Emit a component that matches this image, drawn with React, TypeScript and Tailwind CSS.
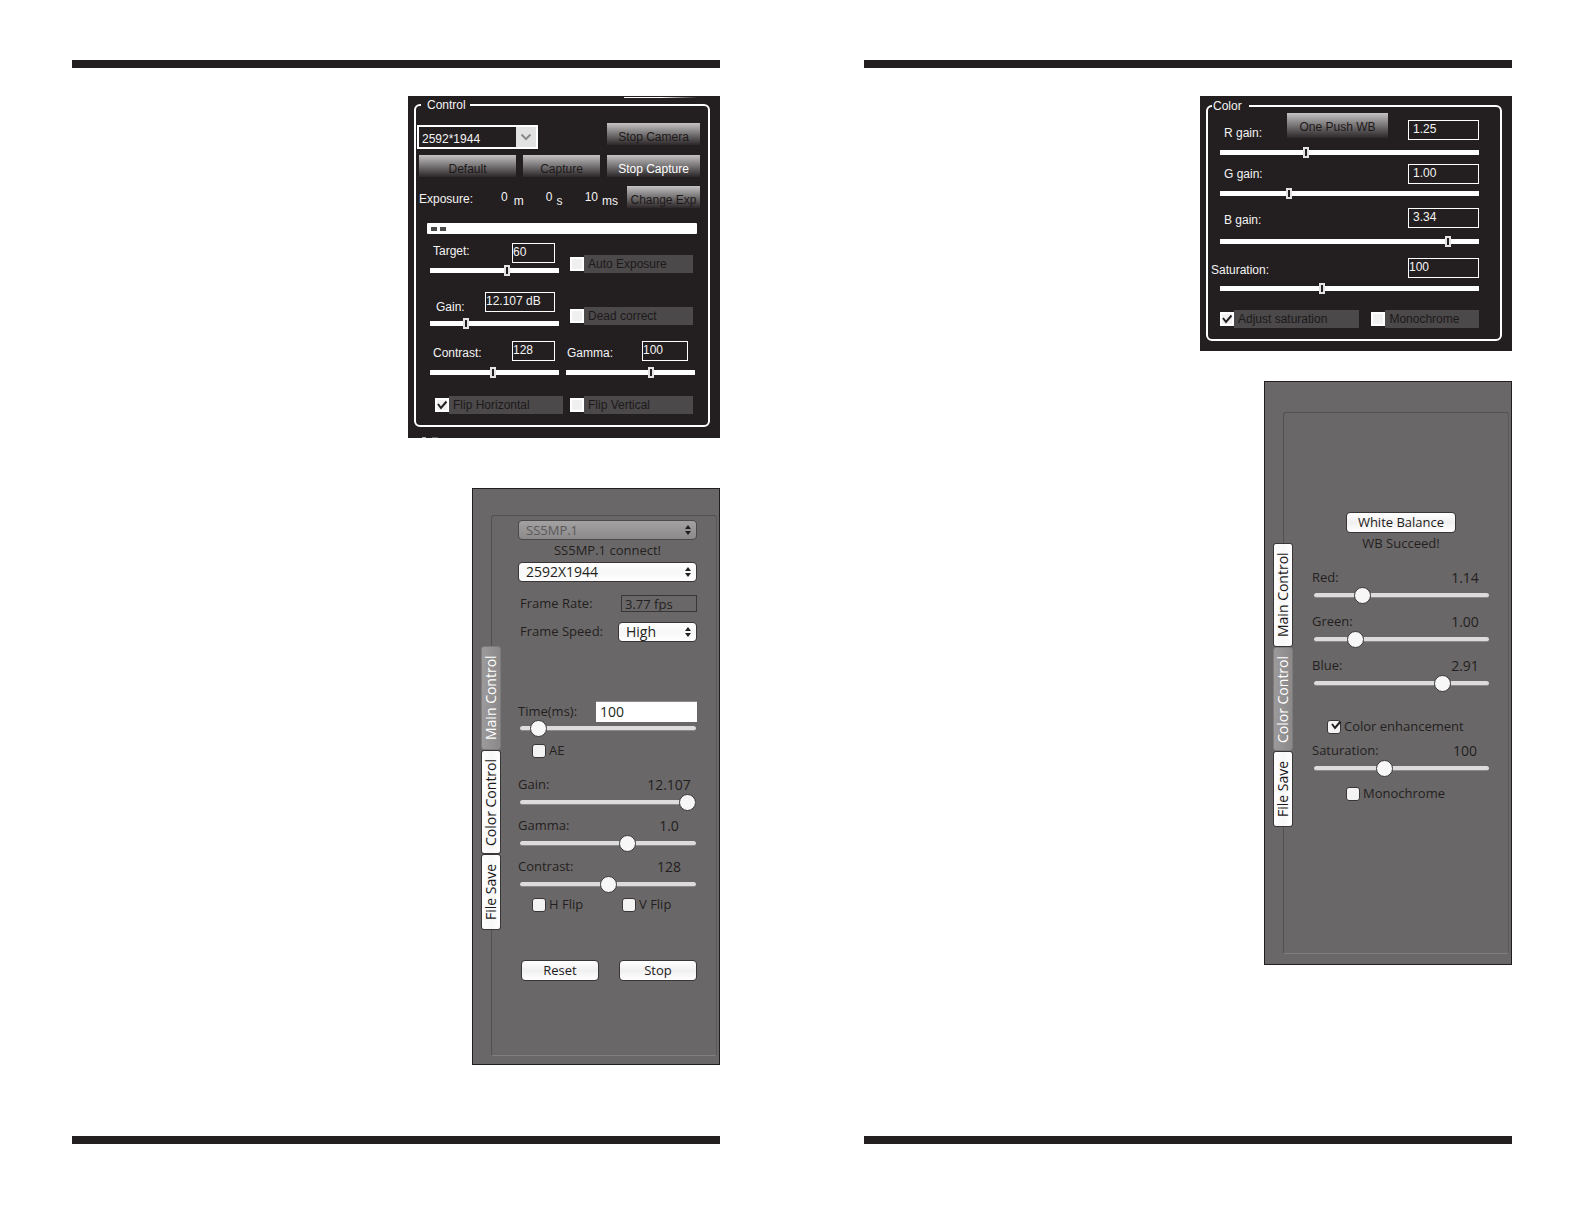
import React from "react";
import clsx from "clsx";

interface ClassNameProps {
  className?: string;
}

interface CheckProps extends ClassNameProps {
  label: string;
  checked?: boolean;
}

interface RangeProps extends ClassNameProps {
  label: string;
  value: number;
}

interface DarkFieldProps extends ClassNameProps {
  id: string;
  label: string;
  value: string;
  position: number;
  labelClass?: string;
  inputClass?: string;
  sliderClass?: string;
}

interface MacSliderProps extends ClassNameProps {
  label: string;
  value: string;
  position: number;
  valueClass: string;
}

interface MacPanelProps extends ClassNameProps {
  active: string;
  contentClass: string;
  children: React.ReactNode;
}

const TABS = [
  { label: "Main Control", height: "h-[104px]" },
  { label: "Color Control", height: "h-[104px]" },
  { label: "File Save", height: "h-[76px]" },
];

const Tick: React.FC<ClassNameProps> = ({ className }) => (
  <svg
    viewBox="0 0 14 14"
    fill="none"
    stroke="#231f20"
    strokeWidth="2"
    className={clsx("pointer-events-none absolute size-3.5", className)}
  >
    <path d="M3 6l3 4 5.500-6.500" />
  </svg>
);

/* Dark panels */

const DarkButton: React.FC<ClassNameProps & { children: string }> = ({
  className,
  children,
}) => (
  <button
    type="button"
    className={clsx(
      "whitespace-nowrap bg-linear-to-b from-[#c4c2c3] via-[#777475] to-[#2c2829] text-center leading-5",
      className
    )}
  >
    {children}
  </button>
);

const DarkRange: React.FC<RangeProps> = ({ label, value, className }) => (
  <input
    type="range"
    aria-label={label}
    defaultValue={value}
    className={clsx(
      "block h-[11px] w-full appearance-none bg-transparent",
      "[&::-webkit-slider-runnable-track]:h-[5px] [&::-webkit-slider-runnable-track]:bg-white",
      "[&::-webkit-slider-thumb]:-mt-[3px] [&::-webkit-slider-thumb]:h-[11px] [&::-webkit-slider-thumb]:w-1.5 [&::-webkit-slider-thumb]:appearance-none [&::-webkit-slider-thumb]:border-2 [&::-webkit-slider-thumb]:border-[#e4e3e3] [&::-webkit-slider-thumb]:bg-[#231f20]",
      className
    )}
  />
);

const DarkCheck: React.FC<CheckProps> = ({ label, checked, className }) => (
  <label className={clsx("flex items-center", className)}>
    <span className="relative flex">
      <input
        type="checkbox"
        defaultChecked={checked}
        className="size-3.5 appearance-none border-2 border-white bg-[#f1f0f0]"
      />
      {checked && <Tick />}
    </span>
    <span className="h-[18px] flex-1 bg-[#4b494a] pl-1 leading-[18px] text-[#1d191a]">
      {label}
    </span>
  </label>
);

const DarkField: React.FC<DarkFieldProps> = ({
  id,
  label,
  value,
  position,
  className,
  labelClass,
  inputClass,
  sliderClass,
}) => (
  <div className={className}>
    <div className="flex h-5 items-start justify-between">
      <label htmlFor={id} className={clsx("leading-4", labelClass)}>
        {label}
      </label>
      <input
        id={id}
        defaultValue={value}
        className={clsx("h-5 border border-white pb-0.5 leading-4", inputClass)}
      />
    </div>
    <DarkRange label={`${label} slider`} value={position} className={sliderClass} />
  </div>
);

const ControlPanel: React.FC = () => (
  <section className="flex w-full max-w-[312px] flex-col overflow-hidden bg-[#231f20] pt-px pr-2.5 pl-1.5 font-['Liberation_Sans',Arial,sans-serif] text-xs text-[#f4f3f3]">
    <div className="mr-3 h-px w-[74px] self-end bg-linear-to-r from-white via-white to-transparent" />
    <fieldset className="min-w-0 rounded-md border-2 border-white pr-2 pb-[11px] pl-[3px]">
      <legend className="ml-0.5 pr-1 pl-1.5 leading-[14px]">Control</legend>
      <div className="flex items-start justify-between pt-[11px]">
        <div className="relative mt-0.5 -ml-0.5 h-6 w-[121px]">
          <select
            aria-label="Resolution"
            className="h-6 w-full appearance-none border-2 border-white bg-[#231f20] pt-0.5 pl-[3px] leading-5"
          >
            <option>2592*1944</option>
          </select>
          <span className="pointer-events-none absolute top-0.5 right-0.5 flex h-5 w-5 items-center justify-center bg-[#e3e2e2]">
            <svg viewBox="0 0 12 8" fill="none" stroke="#8b898a" strokeWidth="2" className="h-2 w-3">
              <path d="M1.5 1.5L6 6l4.500-4.500" />
            </svg>
          </span>
        </div>
        <DarkButton className="h-[22px] w-[93px] pt-1 text-[#1d191a]">Stop Camera</DarkButton>
      </div>
      <div className="mt-1.5 grid grid-cols-[97fr_77fr_93fr] gap-[7px]">
        <DarkButton className="h-[22px] pt-1 text-[#1d191a]">Default</DarkButton>
        <DarkButton className="h-[22px] pt-1 text-[#1d191a]">Capture</DarkButton>
        <DarkButton className="h-[22px] pt-1 text-white">Stop Capture</DarkButton>
      </div>
      <div className="mt-[9px] flex h-[22px] items-center justify-between">
        <span className="w-[82px] pt-1">Exposure:</span>
        <div className="flex flex-1 justify-between pt-1">
          <span className="flex gap-1.5">
            0 <span className="pt-1">m</span>
          </span>
          <span className="flex gap-1">
            0 <span className="pt-1">s</span>
          </span>
          <span className="flex gap-1">
            10 <span className="pt-1">ms</span>
          </span>
        </div>
        <DarkButton className="ml-[9px] h-[22px] w-[73px] pt-1 text-[#1d191a]">
          Change Exp
        </DarkButton>
      </div>
      <div className="mt-[15px] mr-[3px] ml-2 flex h-[11px] items-center gap-[3px] rounded-[1px] bg-white pl-1">
        <span className="h-1 w-1.5 bg-[#4b494a]" />
        <span className="h-1 w-1.5 bg-[#4b494a]" />
      </div>
      <div className="mt-[9px] mr-[5px] ml-[11px]">
        <div className="grid grid-cols-2 gap-[7px]">
          <DarkField
            id="target"
            label="Target:"
            value="60"
            position={60}
            labelClass="pl-[3px]"
            inputClass="mr-1 w-[43px]"
            sliderClass="mt-0.5"
          />
          <DarkCheck label="Auto Exposure" className="mr-0.5 mb-[3px] ml-1 self-end" />
        </div>
        <div className="mt-4 grid grid-cols-2 gap-[7px]">
          <DarkField
            id="gain"
            label="Gain:"
            value="12.107 dB"
            position={27}
            labelClass="pt-[7px] pl-1.5"
            inputClass="mr-1 w-[70px]"
            sliderClass="mt-1.5"
          />
          <DarkCheck label="Dead correct" className="mr-0.5 mb-1 ml-1 self-end" />
        </div>
        <div className="mt-3 grid grid-cols-2 gap-[7px]">
          <DarkField
            id="contrast"
            label="Contrast:"
            value="128"
            position={49}
            labelClass="pt-1 pl-[3px]"
            inputClass="mr-1 w-[43px]"
            sliderClass="mt-1.5"
          />
          <DarkField
            id="gamma"
            label="Gamma:"
            value="100"
            position={67}
            labelClass="pt-1 pl-px"
            inputClass="mr-[7px] w-[46px]"
            sliderClass="mt-1.5"
          />
        </div>
        <div className="mt-[18px] mr-0.5 ml-[5px] grid grid-cols-[128fr_123fr] gap-[7px]">
          <DarkCheck label="Flip Horizontal" checked />
          <DarkCheck label="Flip Vertical" />
        </div>
      </div>
    </fieldset>
    {/* top edge of the next group, cut off by the panel */}
    <div className="mt-2.5 ml-2 flex gap-1.5">
      <span className="h-px w-1 bg-[#b5b3b3]" />
      <span className="h-px w-1.5 bg-[#6a6768]" />
    </div>
  </section>
);

const ColorPanel: React.FC = () => (
  <section className="w-full max-w-[312px] bg-[#231f20] pt-[3px] pr-2.5 pb-2.5 pl-1.5 font-['Liberation_Sans',Arial,sans-serif] text-xs text-[#f4f3f3]">
    <fieldset className="min-w-0 rounded-md border-2 border-white pr-[21px] pb-[11px] pl-3">
      <legend className="-ml-2 pr-[7px] pl-px leading-[14px]">Color</legend>
      <div className="flex h-[27px] items-start">
        <label htmlFor="r-gain" className="w-[67px] pt-3 pl-1 leading-4">
          R gain:
        </label>
        <DarkButton className="h-[25px] w-[101px] pt-0.5 text-[#1d191a]">
          One Push WB
        </DarkButton>
        <input
          id="r-gain"
          defaultValue="1.25"
          className="mt-[7px] ml-auto h-5 w-[71px] border border-white pb-0.5 pl-1 leading-4"
        />
      </div>
      <DarkRange label="R gain slider" value={33} className="mt-[7px]" />
      <DarkField
        id="g-gain"
        label="G gain:"
        value="1.00"
        position={26}
        className="mt-1.5"
        labelClass="pt-0.5 pl-1"
        inputClass="w-[71px] pl-1"
        sliderClass="mt-1"
      />
      <DarkField
        id="b-gain"
        label="B gain:"
        value="3.34"
        position={89}
        className="mt-[9px]"
        labelClass="pt-1 pl-1"
        inputClass="w-[71px] pl-1"
        sliderClass="mt-2"
      />
      <DarkField
        id="saturation"
        label="Saturation:"
        value="100"
        position={39}
        className="mt-[11px]"
        labelClass="-ml-[9px] pt-1"
        inputClass="w-[71px]"
        sliderClass="mt-[5px]"
      />
      <div className="mt-4 grid grid-cols-[140fr_108fr] gap-3">
        <DarkCheck label="Adjust saturation" checked />
        <DarkCheck label="Monochrome" />
      </div>
    </fieldset>
  </section>
);

/* Grey Mac panels */

const MacButton: React.FC<ClassNameProps & { children: string }> = ({
  className,
  children,
}) => (
  <button
    type="button"
    className={clsx(
      "h-[21px] rounded border border-[#3a3637] bg-linear-to-b from-white via-[#f1f0f0] to-white text-[13px] leading-[19px] font-medium text-[#1d191a]",
      className
    )}
  >
    {children}
  </button>
);

const MacSelect: React.FC<
  ClassNameProps & { label: string; value: string; disabled?: boolean }
> = ({ label, value, disabled, className }) => (
  <div className={clsx("relative h-5", className)}>
    <select
      aria-label={label}
      disabled={disabled}
      className={clsx(
        "block h-5 w-full appearance-none rounded border pl-[7px] leading-[18px] opacity-100",
        disabled
          ? "border-[#4b494a] bg-linear-to-b from-[#a3a1a2] to-[#8b898a] text-[#5c595a]"
          : "border-[#3a3637] bg-linear-to-b from-white via-[#f7f7f7] to-white text-sm leading-4 font-medium text-[#231f20]"
      )}
    >
      <option>{value}</option>
    </select>
    <svg
      viewBox="0 0 6 10"
      fill="#231f20"
      className="pointer-events-none absolute top-[5px] right-1.5 h-2.5 w-1.5"
    >
      <path d="M3 0l3 4H0zM3 10L0 6h6z" />
    </svg>
  </div>
);

const MacRange: React.FC<RangeProps> = ({ label, value, className }) => (
  <input
    type="range"
    aria-label={label}
    defaultValue={value}
    className={clsx(
      "block h-[17px] w-full appearance-none bg-transparent pr-px pl-0.5",
      "[&::-webkit-slider-runnable-track]:h-[5px] [&::-webkit-slider-runnable-track]:rounded-full [&::-webkit-slider-runnable-track]:border-b [&::-webkit-slider-runnable-track]:border-[#8b898a] [&::-webkit-slider-runnable-track]:bg-[#dddcdc]",
      "[&::-webkit-slider-thumb]:-mt-1.5 [&::-webkit-slider-thumb]:size-[17px] [&::-webkit-slider-thumb]:appearance-none [&::-webkit-slider-thumb]:rounded-full [&::-webkit-slider-thumb]:border [&::-webkit-slider-thumb]:border-[#3a3637] [&::-webkit-slider-thumb]:bg-[#f7f7f7]",
      className
    )}
  />
);

const MacCheck: React.FC<CheckProps> = ({ label, checked, className }) => (
  <label className={clsx("flex h-5 items-center gap-[3px]", className)}>
    <span className="relative flex">
      <input
        type="checkbox"
        defaultChecked={checked}
        className="size-3.5 appearance-none rounded-[3px] border border-[#3a3637] bg-[#f4f3f3]"
      />
      {checked && <Tick className="-top-0.5 left-0.5" />}
    </span>
    {label}
  </label>
);

const MacSlider: React.FC<MacSliderProps> = ({
  label,
  value,
  position,
  valueClass,
  className,
}) => (
  <div className={className}>
    <div className="flex h-[18px] items-center justify-between">
      <span>{label}</span>
      <output className={clsx("text-center text-sm", valueClass)}>{value}</output>
    </div>
    <MacRange label={label} value={position} />
  </div>
);

const MacPanel: React.FC<MacPanelProps> = ({
  active,
  contentClass,
  className,
  children,
}) => (
  <section
    className={clsx(
      "flex w-full max-w-[248px] border border-[#231f20] bg-[#6a6768] pr-0.5 pl-2 font-['Open_Sans',sans-serif] text-[13px] font-medium text-[#231f20]",
      className
    )}
  >
    <div role="tablist" className="z-10 mt-[131px] flex w-5 flex-col">
      {TABS.map((tab) => (
        <button
          key={tab.label}
          type="button"
          role="tab"
          aria-selected={tab.label === active}
          className={clsx(
            "flex w-5 rotate-180 items-center justify-center rounded-[3px] border text-sm leading-[18px] whitespace-nowrap [writing-mode:vertical-rl]",
            tab.height,
            tab.label === active
              ? "border-[#7d7b7c] bg-linear-to-r from-[#8b898a] to-[#9c9a9b] text-white"
              : "border-[#3a3637] bg-linear-to-r from-white via-[#f7f7f7] to-white text-[#1d191a]"
          )}
        >
          {tab.label}
        </button>
      ))}
    </div>
    <div
      className={clsx(
        "-ml-2.5 min-w-0 flex-1 rounded-[3px] border border-t-[#535051] border-r-[#5c595a] border-b-[#807e7f] border-l-[#535051]",
        contentClass
      )}
    >
      {children}
    </div>
  </section>
);

const MainControl: React.FC = () => (
  <MacPanel
    active="Main Control"
    className="mt-[50px] pt-[26px] pb-2"
    contentClass="pt-1 pr-[19px] pb-[74px] pl-[26px]"
  >
    <MacSelect label="Camera" value="SS5MP.1" disabled />
    <p className="text-center leading-5">SS5MP.1 connect!</p>
    <MacSelect label="Resolution" value="2592X1944" className="mt-0.5" />
    <div className="mt-[13px] flex h-[17px] items-center justify-between pl-0.5">
      <label htmlFor="frame-rate">Frame Rate:</label>
      <input
        id="frame-rate"
        readOnly
        value="3.77 fps"
        className="h-[17px] w-[76px] border border-[#3a3637] pl-[3px] leading-[15px]"
      />
    </div>
    <div className="mt-2.5 flex h-5 items-center justify-between pl-0.5">
      <span>Frame Speed:</span>
      <MacSelect label="Frame Speed" value="High" className="w-[79px]" />
    </div>
    <div className="mt-[59px] flex h-[21px] items-center justify-between">
      <label htmlFor="time">Time(ms):</label>
      <input
        id="time"
        defaultValue="100"
        className="h-[21px] w-[101px] border-t border-[#8b898a] bg-white pb-0.5 pl-1 text-sm leading-4"
      />
    </div>
    <MacRange label="Time" value={6} className="-mt-0.5" />
    <MacCheck label="AE" className="mt-1 ml-3.5" />
    <MacSlider label="Gain:" value="12.107" position={100} valueClass="w-14" className="mt-[15px]" />
    <MacSlider label="Gamma:" value="1.0" position={62} valueClass="w-14" className="mt-1.5" />
    <MacSlider label="Contrast:" value="128" position={50} valueClass="w-14" className="mt-1.5" />
    <div className="mt-0.5 flex pl-3.5">
      <MacCheck label="H Flip" className="w-[90px]" />
      <MacCheck label="V Flip" />
    </div>
    <div className="mt-[45px] flex justify-between pl-[3px]">
      <MacButton className="w-[78px]">Reset</MacButton>
      <MacButton className="w-[78px]">Stop</MacButton>
    </div>
  </MacPanel>
);

const ColorControl: React.FC = () => (
  <MacPanel
    active="Color Control"
    className="mt-[30px] pt-[30px] pb-2.5"
    contentClass="flex flex-col pt-[99px] pr-[18px] pb-[149px] pl-[28px]"
  >
    <MacButton className="w-[110px] self-center">White Balance</MacButton>
    <p className="text-center leading-5">WB Succeed!</p>
    <MacSlider label="Red:" value="1.14" position={25} valueClass="w-[50px]" className="mt-4" />
    <MacSlider label="Green:" value="1.00" position={21} valueClass="w-[50px]" className="mt-[9px]" />
    <MacSlider label="Blue:" value="2.91" position={76} valueClass="w-[50px]" className="mt-[9px]" />
    <MacCheck label="Color enhancement" checked className="mt-[25px] ml-[15px]" />
    <MacSlider
      label="Saturation:"
      value="100"
      position={39}
      valueClass="w-[50px]"
      className="mt-[5px]"
    />
    <MacCheck label="Monochrome" className="mt-[7px] ml-[34px]" />
  </MacPanel>
);

const Page: React.FC<{ children: React.ReactNode }> = ({ children }) => (
  <div className="flex flex-col px-[72px] pt-[60px] pb-20">
    <hr className="h-2 border-0 bg-[#231f20]" />
    <div className="mt-7 flex flex-col items-end">{children}</div>
    <hr className="mt-auto h-2 border-0 bg-[#231f20]" />
  </div>
);

const App: React.FC = () => {
  return (
    <main className="grid min-h-screen grid-cols-2 bg-white">
      <Page>
        <ControlPanel />
        <MainControl />
      </Page>
      <Page>
        <ColorPanel />
        <ColorControl />
      </Page>
    </main>
  );
};

export default App;
